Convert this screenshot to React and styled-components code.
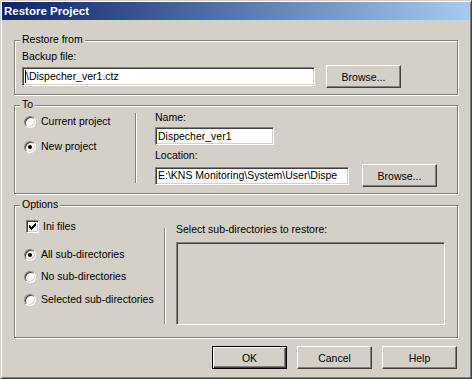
import React from "react";
import styled, { createGlobalStyle } from "styled-components";

const GlobalStyle = createGlobalStyle`
  html, body {
    margin: 0;
    padding: 0;
    background: #d4d0c8;
  }
  body {
    font-family: "Liberation Sans", Arial, sans-serif;
    font-size: 10.5px;
    color: #000;
  }
  * {
    box-sizing: border-box;
  }
`;

const Window = styled.div`
  width: 472px;
  height: 379px;
  background: #d4d0c8;
  border: 1px solid;
  border-color: #d4d0c8 #404040 #404040 #d4d0c8;
  box-shadow: inset 1px 1px #fff, inset -1px -1px #808080;
  padding: 1px;
  display: flex;
  flex-direction: column;
`;

const TitleBar = styled.div`
  height: 18px;
  background: linear-gradient(to right, #0a246a, #a6caf0);
  color: #fff;
  font-weight: bold;
  font-size: 11.5px;
  display: flex;
  align-items: center;
  padding-left: 2px;
`;

const Body = styled.div`
  padding: 20px 12px 0 12px;
  display: flex;
  flex-direction: column;
`;

const Group = styled.div`
  position: relative;
  height: ${(p) => p.$h}px;
  margin-top: ${(p) => p.$mt || 0}px;
  border: 1px solid #808080;
  box-shadow: inset 1px 1px #fff, 1px 1px #fff;
  display: flex;
`;

const Legend = styled.span`
  position: absolute;
  top: -8px;
  left: 5px;
  padding: 0 2px;
  line-height: 13px;
  background: #d4d0c8;
`;

const Column = styled.div`
  display: flex;
  flex-direction: column;
  width: ${(p) => (p.$w ? `${p.$w}px` : "auto")};
  padding: ${(p) => p.$pad || "0"};
  margin-left: ${(p) => p.$ml || 0}px;
  gap: ${(p) => p.$gap || 0}px;
`;

const Label = styled.div`
  line-height: 13px;
  height: 13px;
  margin-top: ${(p) => p.$mt || 0}px;
  white-space: nowrap;
`;

const Row = styled.div`
  display: flex;
  align-items: center;
  margin-top: ${(p) => p.$mt || 0}px;
  gap: ${(p) => p.$gap || 0}px;
`;

const Field = styled.div`
  width: ${(p) => p.$w}px;
  height: ${(p) => p.$h || 18}px;
  margin-top: ${(p) => p.$mt || 0}px;
  background: #fff;
  border: 1px solid;
  border-color: #808080 #fff #fff #808080;
  box-shadow: inset 1px 1px #404040, inset -1px -1px #d4d0c8;
  padding: 0 2px 0 2px;
  display: flex;
  align-items: center;
  white-space: nowrap;
  overflow: hidden;
  line-height: 13px;
`;

const Caret = styled.span`
  width: 1px;
  height: 13px;
  background: #000;
  flex: none;
`;

const Button = styled.button`
  width: 75px;
  height: 23px;
  padding: 0;
  font: inherit;
  color: #000;
  background: #d4d0c8;
  border: 1px solid;
  border-color: #fff #404040 #404040 #fff;
  box-shadow: inset -1px -1px #808080, inset 1px 1px #d4d0c8;
  flex: none;
  ${(p) =>
    p.$default &&
    `
    border: 1px solid #000;
    box-shadow: inset 1px 1px #fff, inset -1px -1px #404040, inset -2px -2px #808080;
  `}
`;

const Separator = styled.div`
  width: 2px;
  height: ${(p) => p.$h}px;
  margin-top: ${(p) => p.$mt}px;
  border-left: 1px solid #808080;
  border-right: 1px solid #fff;
  flex: none;
`;

const OptionRow = styled.div`
  display: flex;
  align-items: center;
  height: 13px;
  line-height: 13px;
  white-space: nowrap;
  margin-left: ${(p) => p.$ml || 0}px;
  margin-top: ${(p) => p.$mt || 0}px;
`;

const Radio = styled.span`
  width: 12px;
  height: 12px;
  border-radius: 50%;
  background: #fff;
  border: 1px solid;
  border-color: #808080 #fff #fff #808080;
  box-shadow: inset 1px 1px #404040, inset -1px -1px #d4d0c8;
  display: flex;
  align-items: center;
  justify-content: center;
  margin-right: 5px;
  flex: none;

  &::after {
    content: "";
    width: 4px;
    height: 4px;
    border-radius: 50%;
    background: ${(p) => (p.$on ? "#000" : "transparent")};
  }
`;

const Check = styled.span`
  width: 13px;
  height: 13px;
  background: #fff;
  border: 1px solid;
  border-color: #808080 #fff #fff #808080;
  box-shadow: inset 1px 1px #404040, inset -1px -1px #d4d0c8;
  display: flex;
  align-items: center;
  justify-content: center;
  margin-right: 4px;
  flex: none;
`;

const ListBox = styled.div`
  width: 269px;
  height: 83px;
  margin-top: 6px;
  background: #d4d0c8;
  border: 1px solid;
  border-color: #808080 #fff #fff #808080;
  box-shadow: inset 1px 1px #404040, inset -1px -1px #d4d0c8;
`;

const ButtonBar = styled.div`
  display: flex;
  justify-content: flex-end;
  gap: 10px;
  margin-top: 8px;
  padding-right: 1px;
`;

const CheckMark = () => (
  <svg width="7" height="7" viewBox="0 0 7 7" shapeRendering="crispEdges">
    <path
      d="M0 2h1v3H0z M1 3h1v3H1z M2 4h1v3H2z M3 3h1v3H3z M4 2h1v3H4z M5 1h1v3H5z M6 0h1v3H6z"
      fill="#000"
    />
  </svg>
);

const RadioOption = ({ on, children, mt }) => (
  <OptionRow $mt={mt}>
    <Radio $on={on} />
    {children}
  </OptionRow>
);

const App = () => {
  return (
    <>
      <GlobalStyle />
      <Window>
        <TitleBar>Restore Project</TitleBar>
        <Body>
          <Group $h={55}>
            <Legend>Restore from</Legend>
            <Column $pad="9px 0 0 7px">
              <Label>Backup file:</Label>
              <Row $mt={2} $gap={11}>
                <Field $w={293} $h={19}>
                  <Caret />
                  \Dispecher_ver1.ctz
                </Field>
                <Button>Browse...</Button>
              </Row>
            </Column>
          </Group>

          <Group $h={89} $mt={10}>
            <Legend>To</Legend>
            <Column $w={120} $pad="9px 0 0 9px" $gap={12}>
              <RadioOption>Current project</RadioOption>
              <RadioOption on>New project</RadioOption>
            </Column>
            <Separator $h={70} $mt={7} />
            <Column $ml={18} $pad="5px 0 0 0">
              <Label>Name:</Label>
              <Field $w={119} $mt={3}>
                Dispecher_ver1
              </Field>
              <Label $mt={4}>Location:</Label>
              <Row $mt={2} $gap={13}>
                <Field $w={194}>E:\KNS Monitoring\System\User\Dispe</Field>
                <Button>Browse...</Button>
              </Row>
            </Column>
          </Group>

          <Group $h={133} $mt={11}>
            <Legend>Options</Legend>
            <Column $w={149} $pad="14px 0 0 9px">
              <OptionRow $ml={2}>
                <Check>
                  <CheckMark />
                </Check>
                Ini files
              </OptionRow>
              <RadioOption on mt={15}>All sub-directories</RadioOption>
              <RadioOption mt={9}>No sub-directories</RadioOption>
              <RadioOption mt={10}>Selected sub-directories</RadioOption>
            </Column>
            <Separator $h={96} $mt={22} />
            <Column $ml={10} $pad="17px 0 0 0">
              <Label>Select sub-directories to restore:</Label>
              <ListBox />
            </Column>
          </Group>

          <ButtonBar>
            <Button $default>OK</Button>
            <Button>Cancel</Button>
            <Button>Help</Button>
          </ButtonBar>
        </Body>
      </Window>
    </>
  );
};

export default App;
